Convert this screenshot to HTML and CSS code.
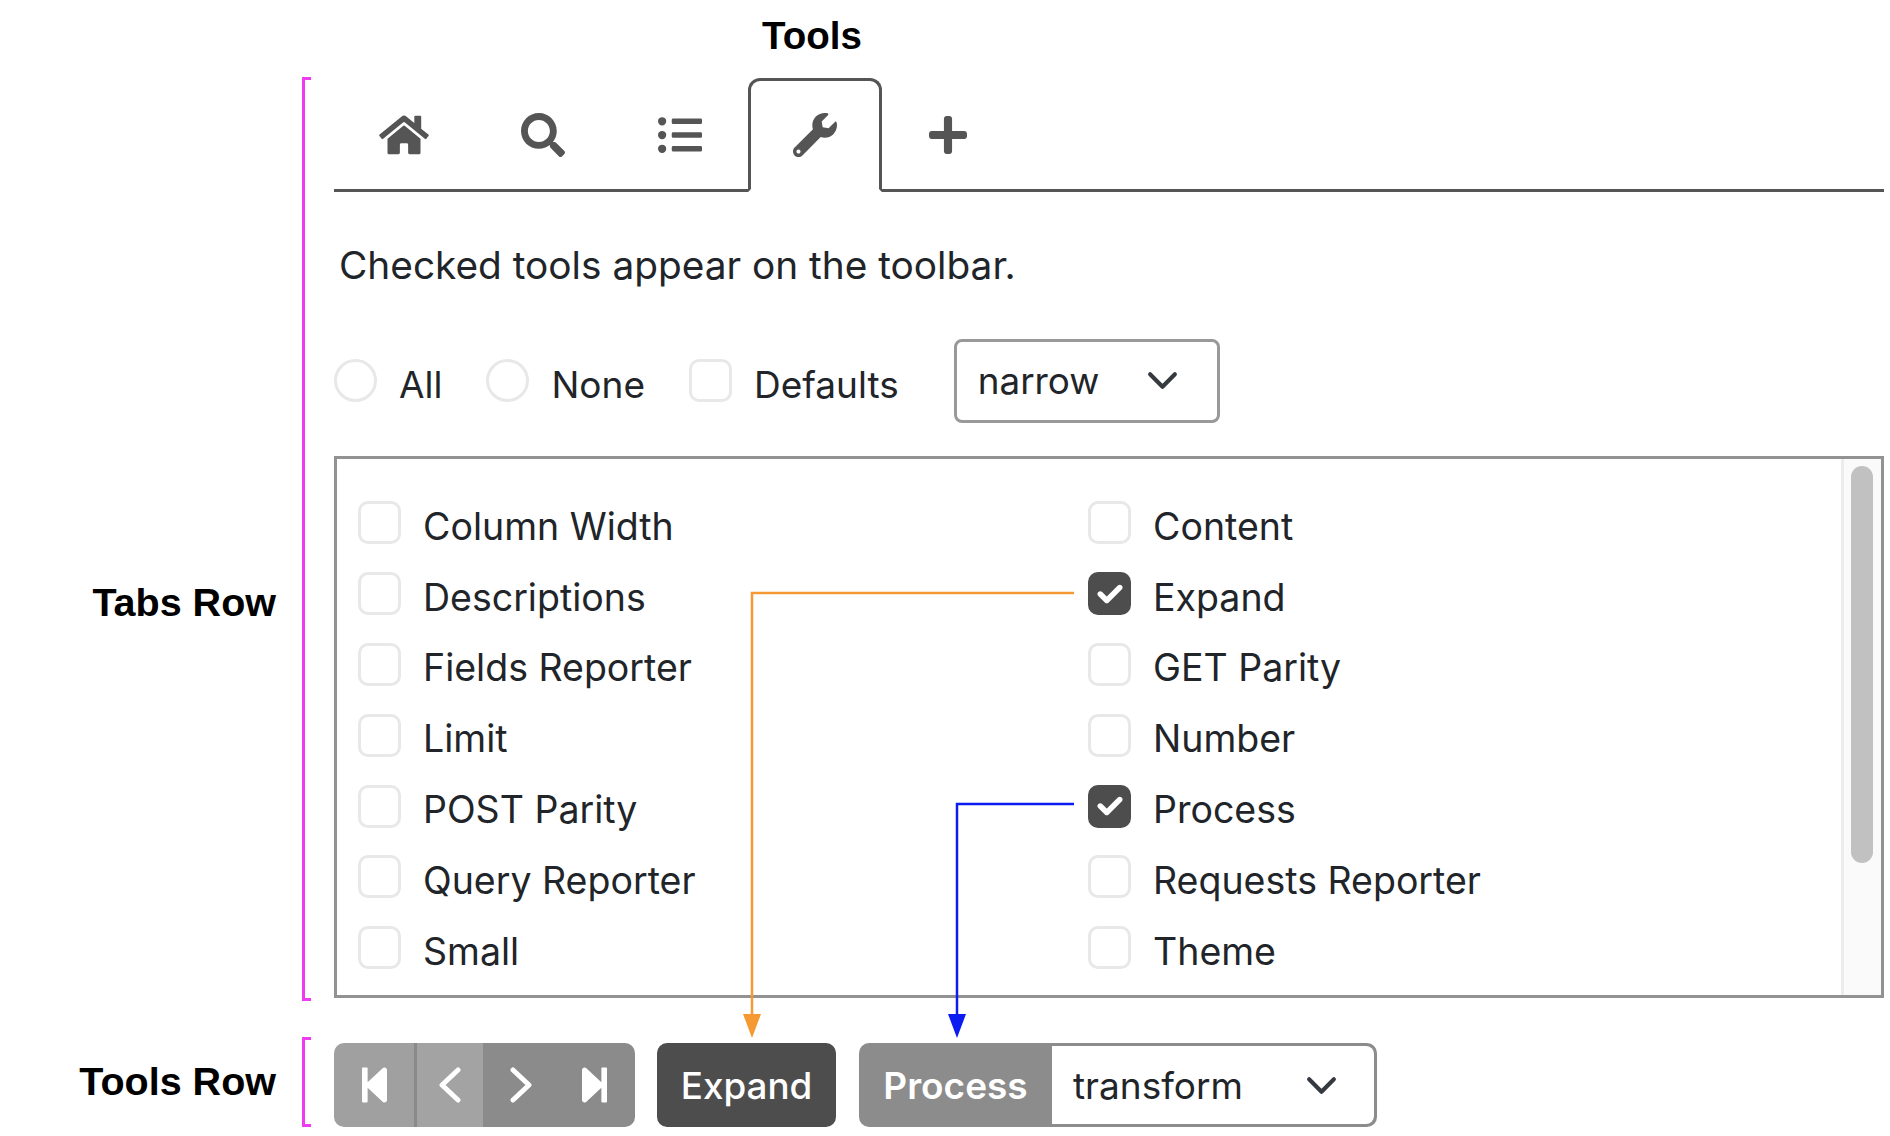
FILE: index.html
```html
<!DOCTYPE html>
<html lang="en">
<head>
    <meta charset="UTF-8">
    <meta name="viewport" content="width=device-width, initial-scale=1.0">
    <title>Tools</title>
    <link rel="stylesheet" href="styles.css">
</head>
<body>
    <div class="page">
        <div class="title">Tools</div>

        <!-- tabs row -->
        <div class="row tabs-row">
            <div class="row-label">Tabs Row</div>
            <div class="bracket"></div>
            <div class="panel">
                <div class="tabs">
                    <div class="tab tab-home">
                        <svg class="icon-home" viewBox="0 0 576 512"><path d="M280.37 148.26L96 300.11V464a16 16 0 0 0 16 16l112.06-.29a16 16 0 0 0 15.92-16V368a16 16 0 0 1 16-16h64a16 16 0 0 1 16 16v95.64a16 16 0 0 0 16 16.05L464 480a16 16 0 0 0 16-16V300L295.67 148.26a12.19 12.19 0 0 0-15.3 0zM571.6 251.47L488 182.56V44.05a12 12 0 0 0-12-12h-56a12 12 0 0 0-12 12v72.61L318.47 43a48 48 0 0 0-61 0L4.34 251.47a12 12 0 0 0-1.6 16.9l25.5 31A12 12 0 0 0 45.15 301l235.22-193.74a12.19 12.19 0 0 1 15.3 0L530.9 301a12 12 0 0 0 16.9-1.6l25.5-31a12 12 0 0 0-1.7-16.93z"/></svg>
                    </div>
                    <div class="tab">
                        <svg class="icon" viewBox="0 0 512 512"><path d="M505 442.7L405.3 343c-4.5-4.5-10.6-7-17-7H372c27.6-35.3 44-79.7 44-128C416 93.1 322.9 0 208 0S0 93.1 0 208s93.1 208 208 208c48.3 0 92.7-16.4 128-44v16.3c0 6.4 2.5 12.5 7 17l99.7 99.7c9.4 9.4 24.6 9.4 33.9 0l28.3-28.3c9.4-9.4 9.4-24.6.1-34zM208 336c-70.7 0-128-57.2-128-128 0-70.7 57.2-128 128-128 70.7 0 128 57.2 128 128 0 70.7-57.2 128-128 128z"/></svg>
                    </div>
                    <div class="tab tab-list">
                        <svg class="icon" viewBox="0 0 512 512"><path d="M48 48a48 48 0 1 0 48 48 48 48 0 0 0-48-48zm0 160a48 48 0 1 0 48 48 48 48 0 0 0-48-48zm0 160a48 48 0 1 0 48 48 48 48 0 0 0-48-48zm448 16H176a16 16 0 0 0-16 16v32a16 16 0 0 0 16 16h320a16 16 0 0 0 16-16v-32a16 16 0 0 0-16-16zm0-320H176a16 16 0 0 0-16 16v32a16 16 0 0 0 16 16h320a16 16 0 0 0 16-16V80a16 16 0 0 0-16-16zm0 160H176a16 16 0 0 0-16 16v32a16 16 0 0 0 16 16h320a16 16 0 0 0 16-16v-32a16 16 0 0 0-16-16z"/></svg>
                    </div>
                    <div class="tab active">
                        <svg class="icon" viewBox="0 0 512 512"><path d="M507.73 109.1c-2.24-9.03-13.54-12.09-20.12-5.51l-74.36 74.36-67.88-11.31-11.31-67.88 74.36-74.36c6.62-6.62 3.43-17.9-5.66-20.16-47.38-11.74-99.55.91-136.58 37.93-39.64 39.64-50.55 97.1-34.05 147.2L18.74 402.76c-24.99 24.99-24.99 65.51 0 90.5 24.99 24.99 65.51 24.99 90.5 0l213.21-213.21c50.12 16.71 107.47 5.68 147.37-34.22 37.07-37.07 49.7-89.32 37.91-136.73zM64 472c-13.25 0-24-10.75-24-24 0-13.26 10.75-24 24-24s24 10.74 24 24c0 13.25-10.75 24-24 24z"/></svg>
                    </div>
                    <div class="tab tab-add">
                        <svg class="icon-plus" viewBox="0 0 448 512"><path d="M416 208H272V64c0-17.67-14.33-32-32-32h-32c-17.67 0-32 14.33-32 32v144H32c-17.67 0-32 14.33-32 32v32c0 17.67 14.33 32 32 32h144v144c0 17.67 14.33 32 32 32h32c17.67 0 32-14.33 32-32V304h144c17.67 0 32-14.33 32-32v-32c0-17.67-14.33-32-32-32z"/></svg>
                    </div>
                </div>

                <p class="hint">Checked tools appear on the toolbar.</p>

                <div class="filters">
                    <div class="option"><span class="box round"></span><span>All</span></div>
                    <div class="option"><span class="box round"></span><span>None</span></div>
                    <div class="option"><span class="box"></span><span>Defaults</span></div>
                    <div class="select narrow">
                        <span>narrow</span>
                        <svg class="chevron" viewBox="0 0 16 16"><path d="M2 5l6 6 6-6"/></svg>
                    </div>
                </div>

                <!-- tool list -->
                <div class="list">
                    <div class="list-items">
                        <div class="option"><span class="box"></span><span>Column Width</span></div>
                        <div class="option"><span class="box"></span><span>Content</span></div>
                        <div class="option"><span class="box"></span><span>Descriptions</span></div>
                        <div class="option"><span class="box checked"><svg viewBox="0 0 24 18"><path d="M3 9l6 6L21 3"/></svg></span><span>Expand</span></div>
                        <div class="option"><span class="box"></span><span>Fields Reporter</span></div>
                        <div class="option"><span class="box"></span><span>GET Parity</span></div>
                        <div class="option"><span class="box"></span><span>Limit</span></div>
                        <div class="option"><span class="box"></span><span>Number</span></div>
                        <div class="option"><span class="box"></span><span>POST Parity</span></div>
                        <div class="option"><span class="box checked"><svg viewBox="0 0 24 18"><path d="M3 9l6 6L21 3"/></svg></span><span>Process</span></div>
                        <div class="option"><span class="box"></span><span>Query Reporter</span></div>
                        <div class="option"><span class="box"></span><span>Requests Reporter</span></div>
                        <div class="option"><span class="box"></span><span>Small</span></div>
                        <div class="option"><span class="box"></span><span>Theme</span></div>
                    </div>
                    <div class="scrollbar"><div class="thumb"></div></div>
                </div>
            </div>
        </div>

        <!-- tools row -->
        <div class="row tools-row">
            <div class="row-label">Tools Row</div>
            <div class="bracket"></div>
            <div class="toolbar">
                <div class="pager">
                    <div class="page-btn first">
                        <svg class="step" viewBox="0 0 448 512"><path d="M64 468V44c0-6.6 5.4-12 12-12h48c6.6 0 12 5.4 12 12v176.4l195.5-181C352.1 22.3 384 36.6 384 64v384c0 27.4-31.9 41.7-52.5 24.6L136 292.7V468c0 6.6-5.4 12-12 12H76c-6.6 0-12-5.4-12-12z"/></svg>
                    </div>
                    <div class="page-btn prev">
                        <svg class="angle" viewBox="0 0 24 36"><path d="M20 3L4 18l16 15"/></svg>
                    </div>
                    <div class="page-btn next">
                        <svg class="angle" viewBox="0 0 24 36"><path d="M4 3l16 15L4 33"/></svg>
                    </div>
                    <div class="page-btn last">
                        <svg class="step flip" viewBox="0 0 448 512"><path d="M64 468V44c0-6.6 5.4-12 12-12h48c6.6 0 12 5.4 12 12v176.4l195.5-181C352.1 22.3 384 36.6 384 64v384c0 27.4-31.9 41.7-52.5 24.6L136 292.7V468c0 6.6-5.4 12-12 12H76c-6.6 0-12-5.4-12-12z"/></svg>
                    </div>
                </div>
                <div class="btn-expand">Expand</div>
                <div class="process">
                    <div class="process-label">Process</div>
                    <div class="select transform">
                        <span>transform</span>
                        <svg class="chevron" viewBox="0 0 16 16"><path d="M2 5l6 6 6-6"/></svg>
                    </div>
                </div>
            </div>
        </div>

        <!-- flechas -->
        <svg class="arrows" viewBox="0 0 1890 1136">
            <polyline class="line-orange" points="1074,593 752,593 752,1016"/>
            <polygon class="head-orange" points="743,1014 761,1014 752,1038"/>
            <polyline class="line-blue" points="1074,804 957,804 957,1016"/>
            <polygon class="head-blue" points="948,1014 966,1014 957,1038"/>
        </svg>
    </div>
</body>
</html>
```

FILE: styles.css
```css
* {
    margin: 0px;
    padding: 0px;
    box-sizing: border-box;
}
html, body {
    height: 100%;
    background-color: white;
}
body {
    font-family: "Inter", "Liberation Sans", sans-serif;
    font-size: 37.5px;
    color: #212529;
}
.page {
    position: relative;
    width: 1890px;
    height: 1136px;
    overflow: hidden;
}

.title {
    height: 77px;
    padding-left: 762px;
    padding-top: 14px;
    font-family: "Liberation Sans", Arial, sans-serif;
    font-weight: bold;
    font-size: 38.5px;
    line-height: 44px;
    color: black;
}

.row {
    display: grid;
    grid-template-columns: 276px 58px 1550px;
}
.row-label {
    font-family: "Liberation Sans", Arial, sans-serif;
    font-weight: bold;
    font-size: 39.5px;
    line-height: 44px;
    color: black;
    text-align: right;
}
.bracket {
    width: 9px;
    margin-left: 26px;
    border: 3px solid #f03cf0;
    border-right: none;
}

.tabs-row {
    height: 924px;
}
.tabs-row .row-label {
    padding-top: 503px;
}
.tools-row {
    height: 88px;
    margin-top: 36px;
    align-items: center;
}
.tools-row .row-label {
    margin-top: -3px;
}
.tools-row .bracket {
    height: 100%;
}

/* tabs */
.panel {
    padding-top: 1px;
}
.tabs {
    display: flex;
    height: 114px;
    border-bottom: 3px solid #555555;
}
.tab {
    display: flex;
    align-items: center;
    justify-content: center;
    width: 138px;
    height: 114px;
    fill: #555555;
}
.tab-home {
    width: 140px;
}
.tab-list {
    width: 136px;
}
.tab.active {
    width: 134px;
    border: 3px solid #555555;
    border-bottom: 3px solid white;
    border-radius: 12px 12px 0px 0px;
}
.tab-add {
    width: 132px;
}
.icon {
    width: 44px;
    height: 44px;
}
.icon-home {
    width: 50px;
    height: 44px;
}
.icon-plus {
    width: 38px;
    height: 44px;
}

.hint {
    padding-left: 5px;
    margin-top: 47px;
    font-size: 38.8px;
    line-height: 52px;
}

/* filtros */
.filters {
    display: flex;
    align-items: center;
    height: 84px;
    margin-top: 48px;
    font-size: 37px;
}
.option {
    display: flex;
    align-items: center;
    gap: 22px;
}
.filters .option {
    margin-right: 44px;
    padding-top: 6px;
}
.box {
    flex-shrink: 0;
    display: flex;
    align-items: center;
    justify-content: center;
    width: 43px;
    height: 43px;
    margin-top: -7px;
    border: 3px solid #e8e8e8;
    border-radius: 10px;
}
.box.round {
    border-radius: 50%;
}
.box.checked {
    background-color: #4d4d4d;
    border-color: #4d4d4d;
}
.box.checked svg {
    flex-shrink: 0;
    width: 26px;
    height: 20px;
    fill: none;
    stroke: white;
    stroke-width: 5;
    stroke-linecap: round;
    stroke-linejoin: round;
}

.select {
    display: flex;
    align-items: center;
    justify-content: space-between;
    background-color: white;
    border: 3px solid #999999;
    border-radius: 8px;
}
.narrow {
    width: 266px;
    height: 84px;
    padding: 0px 38px 2px 21px;
    margin-left: 11px;
    font-size: 36.8px;
}
.chevron {
    width: 33px;
    height: 33px;
    fill: none;
    stroke: #343a40;
    stroke-width: 2;
    stroke-linecap: round;
    stroke-linejoin: round;
}

/* lista */
.list {
    display: flex;
    height: 542px;
    margin-top: 33px;
    border: 3px solid #929292;
}
.list-items {
    flex: 1;
    display: grid;
    grid-template-columns: 730px 1fr;
    grid-auto-rows: 70.8px;
    padding-top: 32px;
    padding-left: 21px;
}
.scrollbar {
    width: 40px;
    padding: 7px 8px 0px 7px;
    background-color: #fafafa;
    border-left: 3px solid #ececec;
}
.thumb {
    height: 397px;
    background-color: #c1c1c1;
    border-radius: 11px;
}

/* barra de herramientas */
.toolbar {
    display: flex;
    align-self: start;
    height: 84px;
    margin-top: 6px;
    gap: 22px;
    font-size: 37px;
    color: white;
}
.pager {
    display: flex;
    width: 301px;
    border-radius: 10px;
    overflow: hidden;
}
.page-btn {
    display: flex;
    align-items: center;
    justify-content: center;
    background-color: #8b8b8b;
    fill: white;
}
.first {
    width: 83px;
    background-color: #a0a0a0;
    border-right: 3px solid #8a8a8a;
}
.prev {
    width: 66px;
    background-color: #a3a3a3;
}
.next {
    width: 75px;
}
.last {
    width: 77px;
    padding-right: 4px;
}
.step {
    width: 35px;
    height: 40px;
}
.step.flip {
    transform: scaleX(-1);
}
.angle {
    width: 24px;
    height: 36px;
    fill: none;
    stroke: white;
    stroke-width: 5;
    stroke-linecap: round;
    stroke-linejoin: round;
}
.btn-expand {
    display: flex;
    align-items: center;
    justify-content: center;
    width: 179px;
    background-color: #4d4d4d;
    border-radius: 10px;
    font-size: 36.8px;
    font-weight: 500;
}
.process {
    display: flex;
    width: 518px;
    margin-left: 1px;
    border-radius: 10px;
    overflow: hidden;
    background-color: #8c8c8c;
}
.process-label {
    display: flex;
    align-items: center;
    justify-content: center;
    width: 193px;
    font-weight: 600;
}
.transform {
    flex: 1;
    padding: 0px 36px 0px 21px;
    margin: 3px 3px 3px 0px;
    border: none;
    border-radius: 0px 8px 8px 0px;
    color: #212529;
}

/* las flechas van por encima de todo */
.arrows {
    position: absolute;
    top: 0px;
    left: 0px;
    width: 1890px;
    height: 1136px;
    pointer-events: none;
}
.line-orange, .line-blue {
    fill: none;
    stroke-width: 2.5;
}
.line-orange {
    stroke: #f59a32;
}
.line-blue {
    stroke: #0a1cf0;
}
.head-orange {
    fill: #f59a32;
}
.head-blue {
    fill: #0a1cf0;
}
```
